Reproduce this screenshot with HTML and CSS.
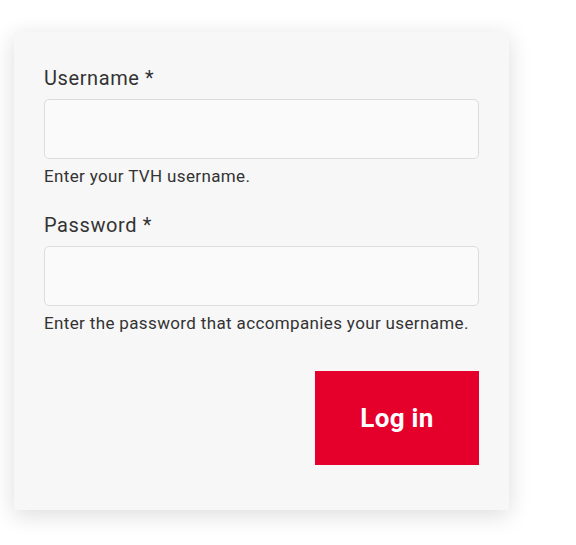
FILE: index.html
```html
<!DOCTYPE html>
<html>
<head>
<meta charset="utf-8">
<link rel="stylesheet" href="styles.css">
</head>
<body>
<div class="page">
  <form class="card">
    <div class="field">
      <label class="label">Username *</label>
      <input class="input" type="text">
      <div class="help">Enter your TVH username.</div>
    </div>
    <div class="field">
      <label class="label">Password *</label>
      <input class="input" type="password">
      <div class="help">Enter the password that accompanies your username.</div>
    </div>
    <div class="actions">
      <button class="btn" type="button">Log in</button>
    </div>
  </form>
</div>
</body>
</html>
```
FILE: styles.css
```css
html, body { margin: 0; padding: 0; background: #fff; }
body { font-family: Roboto, "Liberation Sans", sans-serif; color: #333; }
.page { padding: 32px 0 34px 14px; }
.card {
  width: 435px;
  padding: 34px 30px 45px 30px;
  background: #f7f7f7;
  box-shadow: 0 5px 22px rgba(0,0,0,0.14);
}
.field { display: flex; flex-direction: column; margin-bottom: 27px; }
.label { font-size: 20px; letter-spacing: 0.6px; line-height: 24px; margin-bottom: 9px; color: #333; }
.input {
  box-sizing: border-box;
  height: 60px;
  width: 100%;
  border: 1px solid #dcdcdc;
  border-radius: 5px;
  background: #fafafa;
  margin: 0;
}
.help { font-size: 17px; letter-spacing: 0.36px; line-height: 20px; margin-top: 7px; color: #333; }
.actions { display: flex; justify-content: flex-end; padding-top: 11px; }
.btn {
  width: 164px; height: 94px;
  background: #e4002b;
  color: #fff;
  border: none;
  font-family: Roboto, "Liberation Sans", sans-serif;
  font-weight: bold;
  font-size: 26px;
  letter-spacing: 0.3px;
}
```
